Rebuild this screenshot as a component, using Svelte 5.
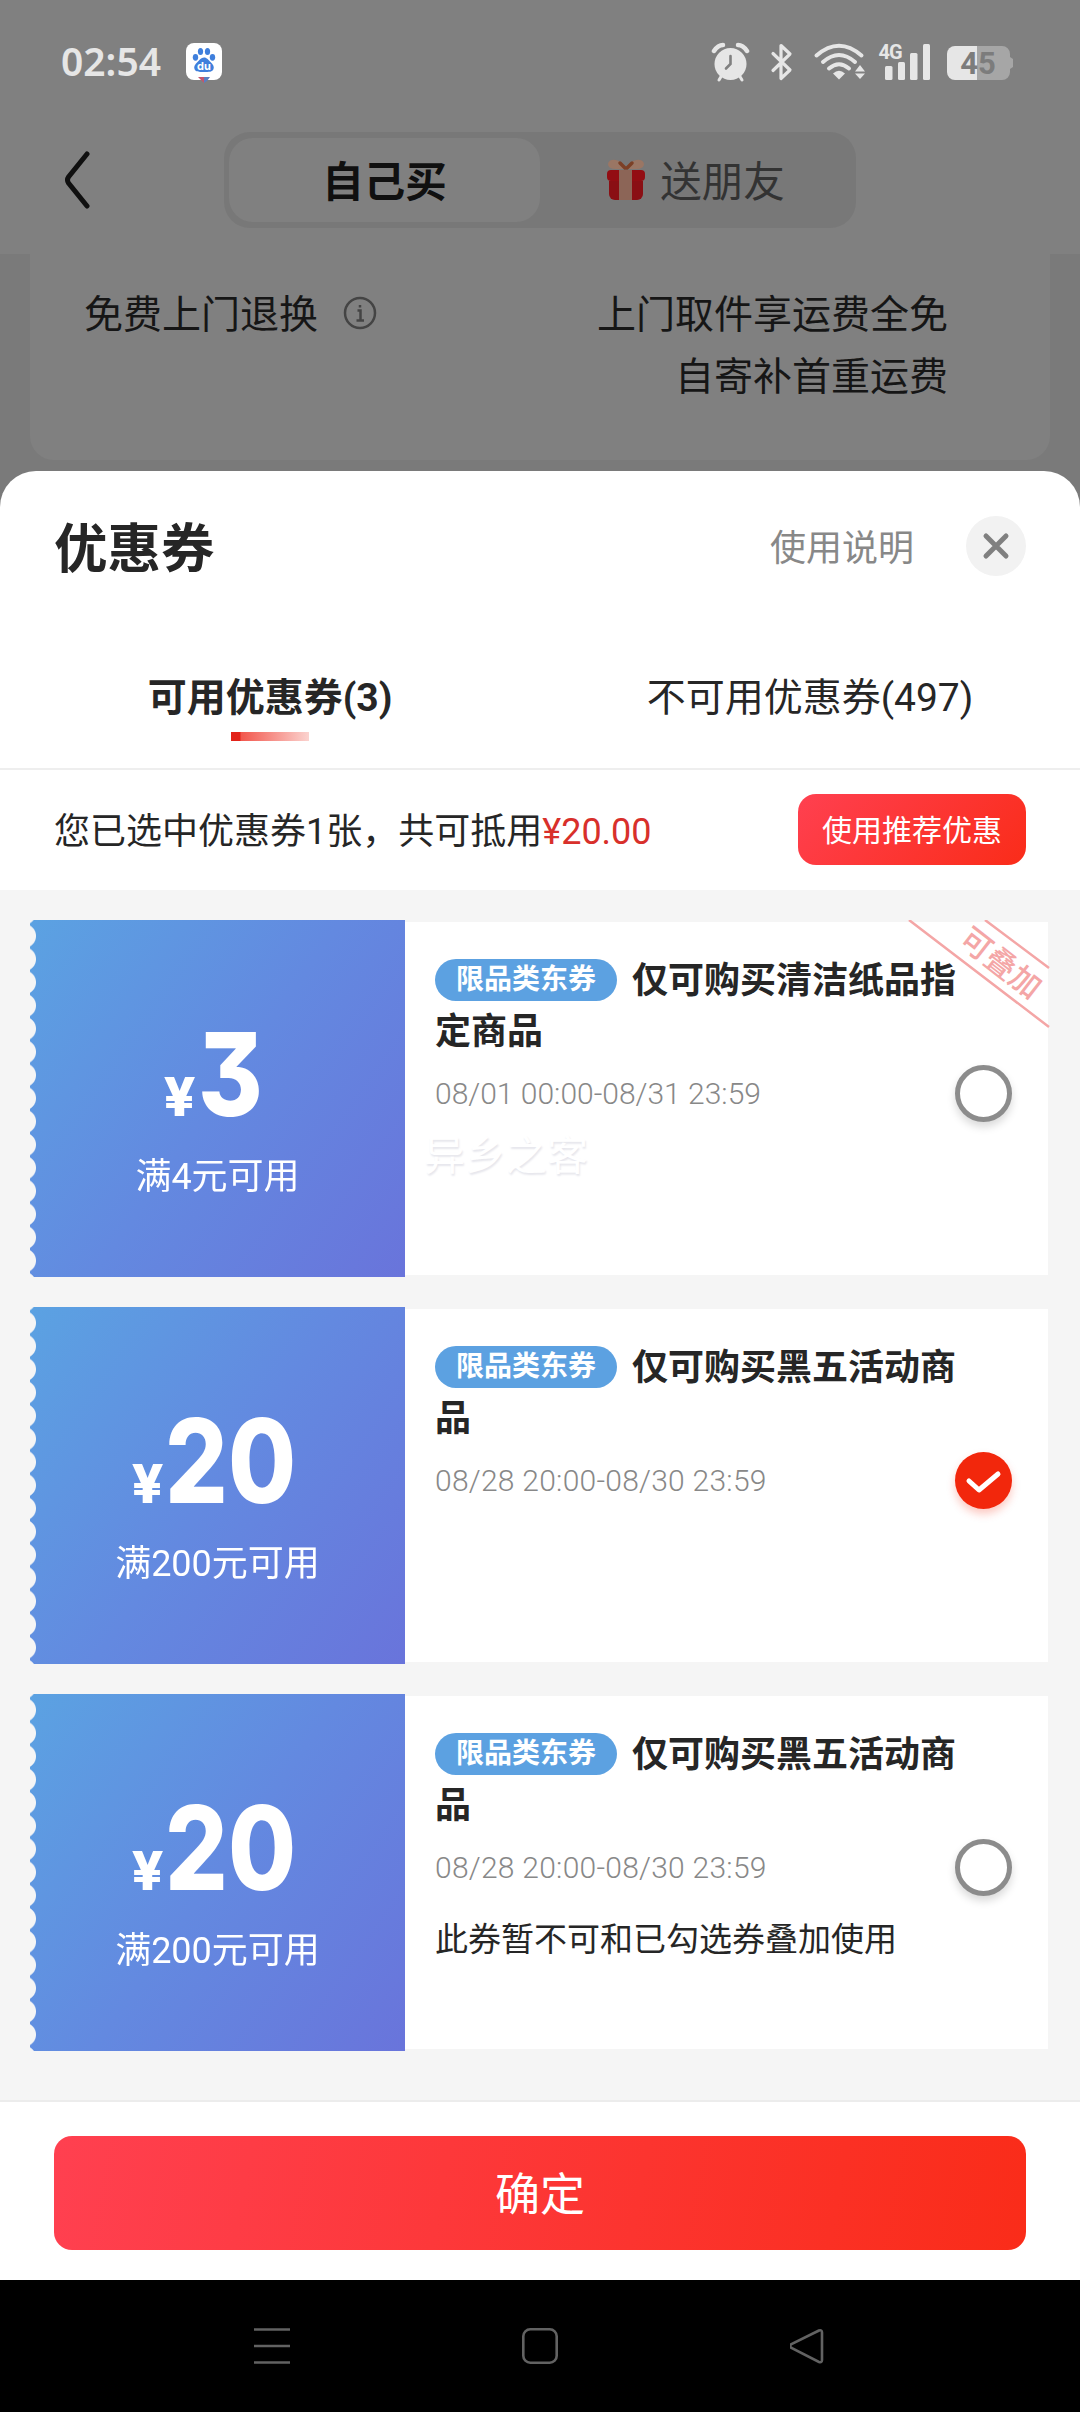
<script lang="ts">
  type Coupon = {
    amount: string;
    condition: string;
    title: string;
    period: string;
    stackable?: boolean;
    note?: string;
  };

  const coupons: Coupon[] = [
    {
      amount: '3',
      condition: '满4元可用',
      title: '仅可购买清洁纸品指定商品',
      period: '08/01 00:00-08/31 23:59',
      stackable: true
    },
    {
      amount: '20',
      condition: '满200元可用',
      title: '仅可购买黑五活动商品',
      period: '08/28 20:00-08/30 23:59'
    },
    {
      amount: '20',
      condition: '满200元可用',
      title: '仅可购买黑五活动商品',
      period: '08/28 20:00-08/30 23:59',
      note: '此券暂不可和已勾选券叠加使用'
    }
  ];

  let selected = $state(1);
</script>

<div class="screen">
  <header class="status">
    <span class="time">02:54</span>
    <svg class="baidu" width="36" height="42" viewBox="0 0 36 42">
      <rect width="36" height="37" rx="8" fill="#fff" />
      <g fill="#3f7fdc">
        <ellipse cx="14.5" cy="8.5" rx="2.6" ry="3.6" />
        <ellipse cx="21.5" cy="8.5" rx="2.6" ry="3.6" />
        <ellipse cx="9.5" cy="14.3" rx="2.7" ry="3.4" />
        <ellipse cx="26.5" cy="14.3" rx="2.7" ry="3.4" />
        <path d="M18 14.5c3 0 4.500 2.500 6.500 4.500 2.500 2.200 4 4.500 3 7-1 3-4.500 3-9.500 3s-8.500 0-9.500-3c-1-2.500.5-4.800 3-7 2-2 3.500-4.500 6.500-4.500z" />
      </g>
      <text x="18" y="27" text-anchor="middle" class="du">du</text>
      <path d="M12 34h6v6z" fill="#c4566c" />
      <path d="M18 34h6l-3 4-3 2z" fill="#5a7fc0" />
    </svg>
    <div class="indicators">
      <svg width="302" height="60" viewBox="711 32 302 60" fill="#e6e6e6">
        <!-- alarm -->
        <circle cx="730.500" cy="64" r="16" />
        <path d="M714 51q4-6 9-6M747 51q-4-6-9-6" stroke="#e6e6e6" stroke-width="4.500" fill="none" stroke-linecap="round" />
        <path d="M722 75l-3 5M739 75l3 5" stroke="#e6e6e6" stroke-width="3" stroke-linecap="round" />
        <path d="M730.500 56v8l-4.500 4.500" stroke="#808080" stroke-width="2.600" fill="none" stroke-linecap="round" />
        <!-- bluetooth -->
        <path d="M773 53.500l17 16.500-9 8.500v-33l9 8.500-17 16.500" stroke="#e6e6e6" stroke-width="3.200" fill="none" stroke-linejoin="round" stroke-linecap="round" />
        <!-- wifi -->
        <g fill="none" stroke="#e6e6e6" stroke-width="4" stroke-linecap="round">
          <path d="M816.500 55.500q22.500-19.500 45 0" />
          <path d="M823 62q16-14 32 0" />
          <path d="M829 68.500q10-8.500 20 0" />
        </g>
        <path d="M839 79.500l-6-6q6-5.500 12 0z" />
        <path d="M860 65l5 6.500h-10zM860 79l5-5.500h-10z" />
        <!-- mobile signal -->
        <text x="878.500" y="59" class="net">4G</text>
        <rect x="885" y="66" width="7.500" height="14" rx="1.500" />
        <rect x="898" y="62" width="7" height="18" rx="1.500" />
        <rect x="910" y="53" width="7.500" height="27" rx="1.500" />
        <rect x="923" y="44" width="7" height="36" rx="1.500" />
        <!-- battery -->
        <path d="M977 46h25a8 8 0 0 1 8 8v3l3 2v8l-3 2v3a8 8 0 0 1-8 8h-25z" fill="#a6a6a6" />
        <path d="M977 46h-22a8 8 0 0 0-8 8v18a8 8 0 0 0 8 8h22z" />
        <text x="978" y="74" text-anchor="middle" class="charge">45</text>
      </svg>
    </div>
  </header>

  <nav class="topbar">
    <svg class="back" width="28" height="60" viewBox="0 0 28 60">
      <path d="M23 4L4.500 27q-2 3 0 6L23 56" />
    </svg>
    <div class="switch">
      <div class="mode active"><span>自己买</span></div>
      <div class="mode">
        <svg width="40" height="42" viewBox="0 0 40 42">
          <path d="M3 22h34v13a6 6 0 0 1-6 6H9a6 6 0 0 1-6-6z" fill="#8a0f14" />
          <rect x="1" y="11" width="38" height="11" rx="4" fill="#930d13" />
          <path d="M13 11h13v30H13z" fill="#8c6557" />
          <path d="M20 10Q17 3 10 1 3 0 2 5q0 5 8 5zM20 10Q23 3 30 1q7-1 8 4 0 5-8 5z" fill="#9a7664" />
          <path d="M19 9l-5-5M21 9l5-5" stroke="#7c4026" stroke-width="3.500" stroke-linecap="round" />
        </svg>
        <span>送朋友</span>
      </div>
    </div>
  </nav>

  <section class="behind">
    <div class="service">
      <div class="service-name">
        免费上门退换
        <svg width="34" height="34" viewBox="0 0 34 34">
          <circle cx="17" cy="17" r="15" />
          <path d="M14.500 14.500h3v10M13.500 24.500h7.500M17 9v2.500" />
        </svg>
      </div>
      <div class="service-value">上门取件享运费全免<br />自寄补首重运费</div>
    </div>
  </section>

  <main class="sheet">
    <div class="sheet-head">
      <h1>优惠券</h1>
      <span class="help">使用说明</span>
      <button class="close" aria-label="关闭">
        <svg width="28" height="28" viewBox="0 0 28 28"><path d="M4 4l20 20M24 4L4 24" /></svg>
      </button>
    </div>

    <div class="tabs">
      <div class="tab current">可用优惠券(3)</div>
      <div class="tab">不可用优惠券(497)</div>
    </div>

    <div class="summary">
      <p>您已选中优惠券1张，共可抵用<b>¥20.00</b></p>
      <button class="recommend">使用推荐优惠</button>
    </div>

    <div class="list">
      {#each coupons as coupon, i}
        <article class="coupon">
          <div class="value">
            <div class="price">
              <span class="yen">¥</span><span class="amount" class:single={coupon.amount.length === 1}>{coupon.amount}</span>
            </div>
            <div class="condition">{coupon.condition}</div>
          </div>
          <div class="info">
            <h2><span class="badge">限品类东券</span>{coupon.title}</h2>
            <div class="period" class:wide={!coupon.stackable}>{coupon.period}</div>
            {#if coupon.note}
              <div class="note">{coupon.note}</div>
            {/if}
            {#if coupon.stackable}
              <div class="watermark">异乡之客</div>
              <svg class="ribbon" width="144" height="112" viewBox="0 0 144 112">
                <path d="M2 0l140 107M78 0l64 48" />
                <text transform="translate(94 43) rotate(38)" text-anchor="middle" y="11">可叠加</text>
              </svg>
            {/if}
            <button
              class="radio"
              class:checked={selected === i}
              aria-label="选择优惠券"
              onclick={() => (selected = i)}
            >
              {#if selected === i}
                <svg width="57" height="57" viewBox="0 0 57 57"><path d="M14 29l10 9 19-16" /></svg>
              {/if}
            </button>
          </div>
        </article>
      {/each}
    </div>

    <footer>
      <button class="confirm">确定</button>
    </footer>
  </main>

  <div class="system-nav">
    <svg width="36" height="36" viewBox="0 0 36 36"><path d="M0 1.500h36M0 18h36M0 34.500h36" /></svg>
    <svg width="36" height="36" viewBox="0 0 36 36"><rect x="1.300" y="1.300" width="33.400" height="33.400" rx="7" /></svg>
    <svg width="36" height="36" viewBox="0 0 36 36">
      <path d="M29 2.500L1.500 16q-2.500 2 0 4L29 34q3 1 3-2V4.500q0-3-3-2z" />
    </svg>
  </div>
</div>

<style>
  :global(body) {
    background: #000;
  }

  .screen {
    display: flex;
    flex-direction: column;
    width: 1080px;
    height: 2412px;
    overflow: hidden;
    background: #7a7a7a;
    color: #262626;
    font-family: Roboto, 'Noto Sans CJK SC', sans-serif;
  }

  button {
    padding: 0;
    border: 0;
    font-family: inherit;
    cursor: pointer;
  }

  svg {
    flex: none;
    display: block;
  }

  .status {
    display: flex;
    align-items: center;
    height: 124px;
    padding: 0 67px 0 61px;
    background: #808080;
    box-sizing: border-box;
  }

  .time {
    width: 125px;
    margin-top: -3px;
    color: #e6e6e6;
    font: 600 39px/40px 'Noto Sans', sans-serif;
  }

  .baidu {
    margin-top: 3px;
  }

  .du {
    fill: #fff;
    font: 700 11px Inter, sans-serif;
  }

  .indicators {
    margin-left: auto;
  }

  .net {
    font: 700 20px Roboto, sans-serif;
    letter-spacing: -1px;
  }

  .charge {
    fill: #7c7c7c;
    font: 700 31px Roboto, sans-serif;
  }

  .topbar {
    display: flex;
    align-items: center;
    height: 130px;
    padding: 0 64px 18px;
    background: #808080;
    box-sizing: border-box;
  }

  .back {
    fill: none;
    stroke: #101010;
    stroke-width: 5;
    stroke-linecap: round;
  }

  .switch {
    display: flex;
    width: 632px;
    height: 96px;
    margin-left: 132px;
    padding: 6px 5px;
    border-radius: 26px;
    background: #787878;
    box-sizing: border-box;
  }

  .mode {
    display: flex;
    flex: 1;
    align-items: center;
    justify-content: center;
    gap: 14px;
    border-radius: 24px;
    color: #333;
    font-size: 41.500px;
    line-height: 80px;
  }

  .mode span {
    margin-top: 5px;
  }

  .mode.active {
    background: #808080;
    color: #101010;
    font-weight: 700;
  }

  .behind {
    height: 217px;
    padding: 0 30px;
  }

  .service {
    display: flex;
    justify-content: space-between;
    height: 206px;
    padding: 30px 102px 0 54px;
    border-radius: 0 0 24px 24px;
    background: #808080;
    box-sizing: border-box;
    color: #161616;
    font-size: 39px;
    line-height: 62px;
  }

  .service-name {
    display: flex;
    align-items: center;
    gap: 25px;
    height: 62px;
  }

  .service-name svg {
    margin-top: -4px;
    fill: none;
    stroke: #444;
    stroke-width: 2.500;
  }

  .service-value {
    text-align: right;
  }

  .sheet {
    display: flex;
    flex-direction: column;
    height: 1809px;
    border-radius: 36px 36px 0 0;
    background: #fff;
  }

  .sheet-head {
    display: flex;
    align-items: center;
    height: 150px;
    padding: 0 54px;
  }

  h1 {
    flex: 1;
    margin: 8px 0 0;
    font-size: 53.500px;
    line-height: 60px;
  }

  .help {
    margin: 5px 52px 0 0;
    color: #888;
    font-size: 36px;
    line-height: 50px;
  }

  .close {
    display: flex;
    align-items: center;
    justify-content: center;
    width: 60px;
    height: 60px;
    border-radius: 50%;
    background: #f2f2f2;
  }

  .close path {
    stroke: #808080;
    stroke-width: 5;
    stroke-linecap: round;
  }

  .tabs {
    display: flex;
    height: 149px;
    padding-top: 47px;
    border-bottom: 2px solid #eee;
    box-sizing: border-box;
  }

  .tab {
    display: flex;
    flex: 1;
    flex-direction: column;
    align-items: center;
    font-size: 39px;
    line-height: 60px;
  }

  .tab.current {
    font-weight: 700;
  }

  .tab.current::after {
    content: '';
    width: 78px;
    height: 9px;
    margin-top: 4px;
    background: linear-gradient(90deg, #e2231a 0 9px, #f2574d 10px, #fbd3cf);
  }

  .summary {
    display: flex;
    align-items: center;
    justify-content: space-between;
    height: 120px;
    padding: 0 54px;
  }

  .summary p {
    margin: 3px 0 0;
    font-size: 36px;
    line-height: 50px;
  }

  .summary b {
    color: #d8302b;
    font-weight: 400;
  }

  .recommend {
    width: 228px;
    height: 71px;
    margin-top: -1px;
    padding-bottom: 3px;
    border-radius: 18px;
    background: linear-gradient(135deg, #ff4050, #fa2c19);
    color: #fff;
    font-size: 30px;
  }

  .list {
    display: flex;
    flex-direction: column;
    gap: 30px;
    height: 1210px;
    padding: 30px 32px 0 30px;
    background: #f5f5f5;
    box-sizing: border-box;
  }

  .coupon {
    display: flex;
    height: 357px;
  }

  /* scalloped left edge */
  .value {
    display: flex;
    flex-direction: column;
    align-items: center;
    width: 375px;
    padding-top: 94px;
    background: linear-gradient(125deg, #5ba2e2, #6389e0 50%, #6974db);
    box-sizing: border-box;
    color: #fff;
    -webkit-mask: radial-gradient(circle at -6px 50%, transparent 11.500px, #000 12.500px) 0 4.400px / 100% 23.200px;
    mask: radial-gradient(circle at -6px 50%, transparent 11.500px, #000 12.500px) 0 4.400px / 100% 23.200px;
  }

  .price {
    display: flex;
    align-items: baseline;
    height: 138px;
    padding-right: 10px;
    line-height: 120px;
  }

  .yen {
    margin-right: 2px;
    font-family: Inter, Roboto, sans-serif;
    font-size: 53px;
    font-weight: 800;
    transform: scaleX(1.05);
    transform-origin: 100% 50%;
  }

  .amount {
    width: 127px;
    font-family: Inter, Roboto, sans-serif;
    font-size: 116px;
    font-weight: 800;
    font-feature-settings: 'cv09';
    transform: scaleX(0.85);
    transform-origin: 0 50%;
  }

  .amount.single {
    width: 62px;
  }

  .condition {
    font-size: 36px;
    line-height: 50px;
  }

  .info {
    position: relative;
    flex: 1;
    margin: 2px 0;
    padding: 34px 90px 0 30px;
    background: #fff;
  }

  h2 {
    margin: 0;
    font-size: 36px;
    line-height: 51px;
  }

  .badge {
    display: inline-block;
    width: 182px;
    margin-right: 15px;
    border-radius: 21px;
    background: #5ca1e1;
    color: #fff;
    font-size: 28px;
    line-height: 42px;
    text-align: center;
    vertical-align: 4px;
  }

  .period {
    margin-top: 14px;
    color: #888;
    font-size: 30px;
    font-weight: 300;
    line-height: 44px;
  }

  .period.wide {
    letter-spacing: 0.25px;
  }

  .note {
    margin-top: 26px;
    font-size: 33px;
    line-height: 48px;
    white-space: nowrap;
  }

  .watermark {
    margin: 10px 0 0 -11px;
    color: #fff;
    font-size: 41px;
    line-height: 60px;
    text-shadow: 1px 2px 2px #e6e6ec;
  }

  .ribbon {
    position: absolute;
    top: -2px;
    right: -3px;
    fill: #f4a6a6;
    font-size: 31px;
    font-weight: 500;
  }

  .ribbon path {
    fill: none;
    stroke: #f4a6a6;
    stroke-width: 2.500;
  }

  .radio {
    position: absolute;
    top: 143px;
    right: 36px;
    width: 57px;
    height: 57px;
    border: 5px solid #8c8c8c;
    border-radius: 50%;
    background: #fff;
    box-shadow: 0 5px 8px rgba(0, 0, 0, 0.15);
  }

  .radio.checked {
    border: 0;
    background: #f2270c;
    box-shadow: 0 5px 8px rgba(242, 39, 12, 0.25);
  }

  .radio path {
    fill: none;
    stroke: #fff;
    stroke-width: 5;
    stroke-linecap: round;
    stroke-linejoin: round;
  }

  footer {
    flex: 1;
    padding: 34px 54px 0;
    border-top: 2px solid #ececec;
  }

  .confirm {
    width: 100%;
    height: 114px;
    padding-bottom: 4px;
    border-radius: 18px;
    background: linear-gradient(100deg, #ff4050, #fa2c19);
    color: #fff;
    font-size: 45px;
  }

  .system-nav {
    display: flex;
    align-items: center;
    justify-content: space-between;
    height: 132px;
    padding: 0 254px;
    background: #000;
  }

  .system-nav svg {
    fill: none;
    stroke: #626262;
    stroke-width: 2.600;
  }
</style>
